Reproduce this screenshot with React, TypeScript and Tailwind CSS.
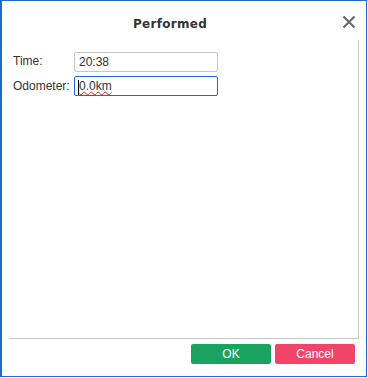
import React from "react";

const FONT = { fontFamily: '"Liberation Sans", Arial, sans-serif' };

export default function App() {
  return (
    <div className="w-[368px] h-[378px] bg-white" style={FONT}>
      <div className="relative w-[367px] h-[377px] border-l-2 border-t border-r border-b border-[#1c6dca] bg-white flex flex-col">
        {/* header */}
        <div className="h-[39px] flex items-center pl-[106px] pt-[7px]">
          <div
            className="w-[124px] text-center text-[12px] font-bold text-[#333] tracking-[0.3px]"
            style={{ fontFamily: '"DejaVu Sans", Verdana, sans-serif' }}
          >
            Performed
          </div>
        </div>
        <button className="absolute right-[8px] top-[12px] w-[18px] h-[18px] flex items-center justify-center">
          <svg width="14" height="14" viewBox="0 0 14 14">
            <path d="M1.5 1.5 L12.5 12.5 M12.5 1.5 L1.5 12.5" stroke="#6b6b6b" strokeWidth="2.2" />
          </svg>
        </button>

        {/* body panel */}
        <div className="ml-[7px] w-[350px] h-[299px] border-r border-b border-[#c8c8c8] pt-[12px] pl-[4px] flex flex-col gap-[4px]">
          <div className="flex items-start h-[20px]">
            <div className="w-[61px] text-[12px] text-[#333] pt-[2px] leading-[14px]">Time:</div>
            <div className="w-[144px] h-[20px] border border-[#c6c6c6] rounded-[2px] pl-[4px] text-[12px] text-[#333] leading-[18px]">
              20:38
            </div>
          </div>
          <div className="flex items-center h-[20px]">
            <div className="w-[61px] text-[12px] text-[#333] leading-[14px]">Odometer:</div>
            <div className="w-[144px] h-[20px] border border-[#1c6dca] rounded-[2px] pl-[4px] text-[12px] text-[#333] leading-[18px]">
              <span className="relative underline decoration-wavy decoration-[#e02020] underline-offset-[1px] decoration-[1px]">
                <span className="absolute left-[-1px] top-[1px] w-[1px] h-[15px] bg-black" />
                0.0km
              </span>
            </div>
          </div>
        </div>

        {/* footer */}
        <div className="flex justify-end gap-[4px] pt-[5px] pr-[11px]">
          <button className="w-[80px] h-[20px] rounded-[2px] bg-[#1aa35e] text-white text-[12px] leading-[20px]">
            OK
          </button>
          <button className="w-[80px] h-[20px] rounded-[2px] bg-[#f0446a] text-white text-[12px] leading-[20px]">
            Cancel
          </button>
        </div>
      </div>
    </div>
  );
}
